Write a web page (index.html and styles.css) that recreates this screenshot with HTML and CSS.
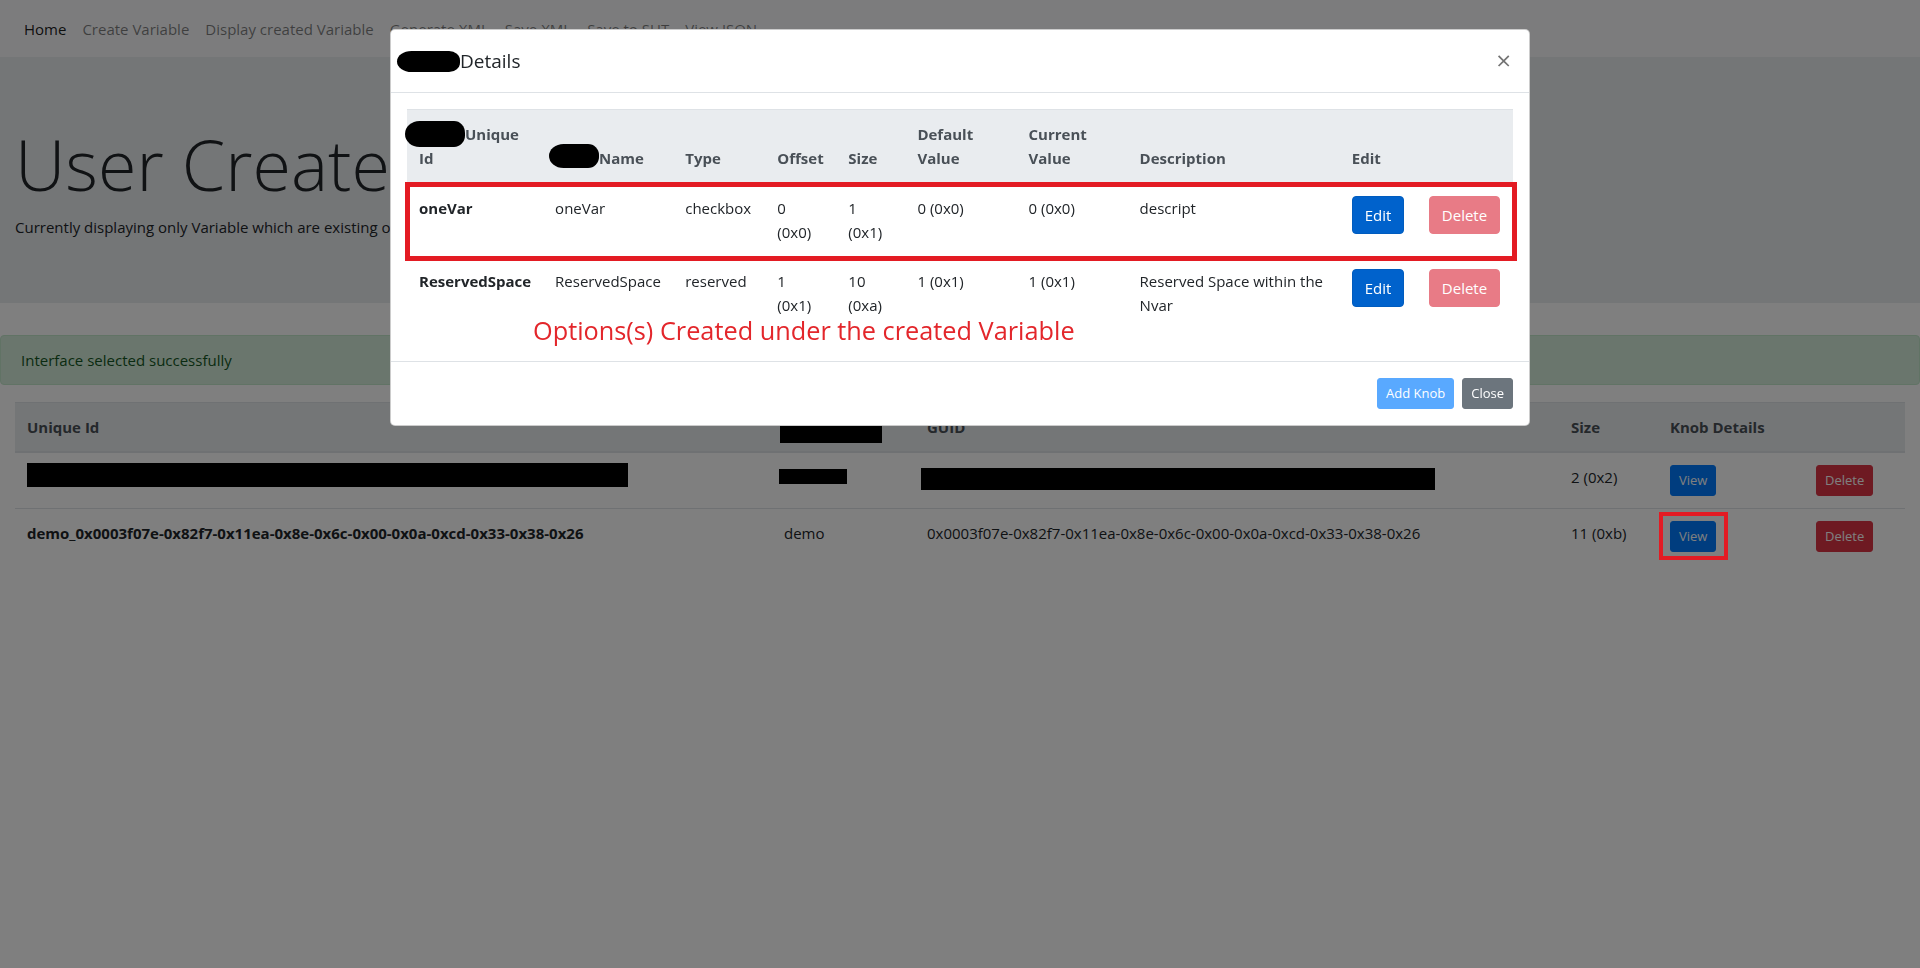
FILE: index.html
```html
<!DOCTYPE html>
<html lang="en">
<head>
<meta charset="utf-8">
<title>User Created Variables</title>
<link rel="stylesheet" href="styles.css">
</head>
<body>
<nav class="navbar">
  <a class="nav-link active" href="#">Home</a>
  <a class="nav-link" href="#">Create Variable</a>
  <a class="nav-link" href="#">Display created Variable</a>
  <a class="nav-link" href="#">Generate XML</a>
  <a class="nav-link" href="#">Save XML</a>
  <a class="nav-link" href="#">Save to SUT</a>
  <a class="nav-link" href="#">View JSON</a>
</nav>

<header class="jumbotron">
  <h1 class="display">User Created</h1>
  <p class="sub">Currently displaying only Variable which are existing on</p>
</header>

<div class="alert">Interface selected successfully</div>

<main class="page">
  <table class="table main-table">
    <colgroup>
      <col class="m-c1"><col class="m-c2"><col class="m-c3"><col class="m-c4"><col class="m-c5"><col class="m-c6">
    </colgroup>
    <thead>
      <tr>
        <th>Unique Id</th>
        <th><span class="redact r-h2"></span></th>
        <th>GUID</th>
        <th>Size</th>
        <th>Knob Details</th>
        <th></th>
      </tr>
    </thead>
    <tbody>
      <tr>
        <td><span class="redact r-11"></span></td>
        <td><span class="redact r-12"></span></td>
        <td><span class="redact r-13"></span></td>
        <td>2 (0x2)</td>
        <td><button class="btn btn-sm btn-primary">View</button></td>
        <td><button class="btn btn-sm btn-danger">Delete</button></td>
      </tr>
      <tr>
        <td class="bold">demo_0x0003f07e-0x82f7-0x11ea-0x8e-0x6c-0x00-0x0a-0xcd-0x33-0x38-0x26</td>
        <td>demo</td>
        <td>0x0003f07e-0x82f7-0x11ea-0x8e-0x6c-0x00-0x0a-0xcd-0x33-0x38-0x26</td>
        <td>11 (0xb)</td>
        <td><span class="marked"><button class="btn btn-sm btn-primary">View</button></span></td>
        <td><button class="btn btn-sm btn-danger">Delete</button></td>
      </tr>
    </tbody>
  </table>
</main>

<div class="backdrop"></div>

<div class="modal">
  <div class="modal-dialog">
    <div class="modal-content">
      <div class="modal-header">
        <h5 class="modal-title"><span class="scribble s-title"></span>Details</h5>
        <button class="close" type="button">&times;</button>
      </div>
      <div class="modal-body">
        <table class="table knob-table">
          <colgroup>
            <col class="k-c1"><col class="k-c2"><col class="k-c3"><col class="k-c4"><col class="k-c5">
            <col class="k-c6"><col class="k-c7"><col class="k-c8"><col class="k-c9"><col class="k-c10">
          </colgroup>
          <thead>
            <tr>
              <th><span class="scribble s-uid"></span>Unique Id</th>
              <th><span class="scribble s-name"></span>Name</th>
              <th>Type</th>
              <th>Offset</th>
              <th>Size</th>
              <th>Default Value</th>
              <th>Current Value</th>
              <th>Description</th>
              <th>Edit</th>
              <th></th>
            </tr>
          </thead>
          <tbody>
            <tr>
              <td class="bold">oneVar</td>
              <td>oneVar</td>
              <td>checkbox</td>
              <td>0 (0x0)</td>
              <td>1 (0x1)</td>
              <td>0 (0x0)</td>
              <td>0 (0x0)</td>
              <td>descript</td>
              <td><button class="btn btn-edit">Edit</button></td>
              <td><button class="btn btn-danger" disabled>Delete</button></td>
            </tr>
            <tr>
              <td class="bold">ReservedSpace</td>
              <td>ReservedSpace</td>
              <td>reserved</td>
              <td>1 (0x1)</td>
              <td>10 (0xa)</td>
              <td>1 (0x1)</td>
              <td>1 (0x1)</td>
              <td>Reserved Space within the Nvar</td>
              <td><button class="btn btn-edit">Edit</button></td>
              <td><button class="btn btn-danger" disabled>Delete</button></td>
            </tr>
          </tbody>
        </table>
        <div class="annot-box"></div>
        <div class="annot-text">Options(s) Created under the created Variable</div>
      </div>
      <div class="modal-footer">
        <button class="btn btn-sm btn-primary" disabled>Add Knob</button>
        <button class="btn btn-sm btn-secondary">Close</button>
      </div>
    </div>
  </div>
</div>
</body>
</html>
```

FILE: styles.css
```css
* { box-sizing: border-box; }

html, body {
  height: 100%;
  overflow: hidden;
}

body {
  margin: 0;
  font-family: "Open Sans", "Noto Sans", sans-serif;
  font-size: 15px;
  line-height: 24px;
  color: #212529;
  background: #fff;
}

/* navbar */
.navbar {
  display: flex;
  align-items: center;
  height: 57px;
  padding: 8px 16px;
  background: #f8f9fa;
}
.nav-link {
  padding: 8px;
  color: rgba(0, 0, 0, .5);
  text-decoration: none;
}
.nav-link.active { color: rgba(0, 0, 0, .9); }

/* jumbotron */
.jumbotron {
  background: #e9ecef;
  padding: 64px 15px 64px;
  margin-bottom: 32px;
}
.display {
  margin: 0 0 8px;
  font-size: 70px;
  font-weight: 300;
  line-height: 86px;
  white-space: nowrap;
}
.sub { margin: 0; }

/* alert */
.alert {
  padding: 12px 20px;
  margin-bottom: 17px;
  background: #d4edda;
  color: #155724;
  border: 1px solid #c3e6cb;
  border-radius: 4px;
}

/* tables */
.page { padding: 0 15px; }
.table {
  width: 100%;
  border-collapse: collapse;
  table-layout: fixed;
}
.table th, .table td {
  padding: 12px;
  text-align: left;
  vertical-align: top;
  border-top: 1px solid #dee2e6;
}
.table thead th {
  vertical-align: bottom;
  background: #e9ecef;
  color: #495057;
  font-weight: 700;
  border-bottom: 2px solid #dee2e6;
}
.bold { font-weight: 700; }

.m-c1 { width: 757px; }
.m-c2 { width: 143px; }
.m-c3 { width: 644px; }
.m-c4 { width: 99px; }
.m-c5 { width: 146px; }
.m-c6 { width: 101px; }

.k-c1 { width: 136px; }
.k-c2 { width: 130px; }
.k-c3 { width: 92px; }
.k-c4 { width: 71px; }
.k-c5 { width: 69px; }
.k-c6 { width: 111px; }
.k-c7 { width: 111px; }
.k-c8 { width: 212px; }
.k-c9 { width: 77px; }
.k-c10 { width: 96px; }

.knob-table td:nth-child(4),
.knob-table td:nth-child(5) { padding-right: 16px; }

/* redactions */
.redact {
  display: inline-block;
  background: #000;
  vertical-align: top;
}
.r-h2 { width: 102px; height: 23px; margin: 5px 0 -4px -4px; }
.r-11 { width: 601px; height: 24px; margin: -2px 0 2px 0; }
.r-12 { width: 68px; height: 15px; margin: 4px 0 5px -5px; }
.r-13 { width: 514px; height: 22px; margin: 3px 0 -1px -6px; }

.scribble {
  display: inline-block;
  background: #000;
  border-radius: 16px 12px 12px 16px / 55% 50% 50% 55%;
}
.s-title { width: 63px; height: 21px; margin-left: -10px; vertical-align: -4px; }
.s-uid { width: 60px; height: 26px; margin-left: -14px; vertical-align: top; margin-top: -1px; margin-bottom: -2px; }
.s-name { width: 50px; height: 24px; margin-left: -6px; vertical-align: top; margin-top: -2px; margin-bottom: 2px; }

/* buttons */
.btn {
  display: inline-block;
  font-family: inherit;
  font-size: 15px;
  font-weight: 400;
  line-height: 24px;
  padding: 6px 12px;
  color: #fff;
  border: 1px solid transparent;
  border-radius: 4px;
  vertical-align: middle;
  white-space: nowrap;
  cursor: pointer;
}
.btn-sm {
  font-size: 13px;
  line-height: 21px;
  padding: 4px 8px;
  border-radius: 3px;
}
.btn-primary { background: #007bff; border-color: #007bff; }
.btn-edit { background: #0062cc; border-color: #005cbf; }
.btn-danger { background: #dc3545; border-color: #dc3545; }
.btn-secondary { background: #6c757d; border-color: #6c757d; }
.btn:disabled { opacity: .65; cursor: default; }

.marked {
  position: relative;
  display: inline-block;
  vertical-align: middle;
}
.marked .btn { display: block; }
.marked::after {
  content: "";
  position: absolute;
  left: -11px;
  right: -12px;
  top: -9px;
  bottom: -8px;
  border: 4px solid #e31b23;
  z-index: 1045;
}

/* modal */
.backdrop {
  position: fixed;
  inset: 0;
  background: #000;
  opacity: .5;
  z-index: 1040;
}
.modal {
  position: fixed;
  inset: 0;
  z-index: 1050;
}
.modal-dialog {
  max-width: 1140px;
  margin: 29px auto;
}
.modal-content {
  background: #fff;
  border: 1px solid rgba(0, 0, 0, .2);
  border-radius: 5px;
}
.modal-header {
  display: flex;
  align-items: flex-start;
  padding: 16px;
  border-bottom: 1px solid #dee2e6;
}
.modal-title {
  margin: 0;
  font-size: 19px;
  font-weight: 400;
  line-height: 30px;
  color: #212529;
}
.close {
  margin: -17px -14px -16px auto;
  padding: 16px;
  background: transparent;
  border: 0;
  font-family: inherit;
  font-size: 26px;
  font-weight: 400;
  line-height: 30px;
  color: #000;
  opacity: .55;
}
.modal-body {
  position: relative;
  padding: 16px;
}
.knob-table { margin-bottom: 16px; }
.modal-footer {
  display: flex;
  justify-content: flex-end;
  align-items: center;
  padding: 12px;
  border-top: 1px solid #dee2e6;
}
.modal-footer .btn { margin: 4px; }

.annot-box {
  position: absolute;
  left: 14px;
  top: 89px;
  width: 1112px;
  height: 79px;
  border: 5px solid #e31b23;
}
.annot-text {
  position: absolute;
  left: 142px;
  top: 220px;
  font-size: 25.3px;
  line-height: 34px;
  color: #e3262b;
  white-space: nowrap;
}
```
